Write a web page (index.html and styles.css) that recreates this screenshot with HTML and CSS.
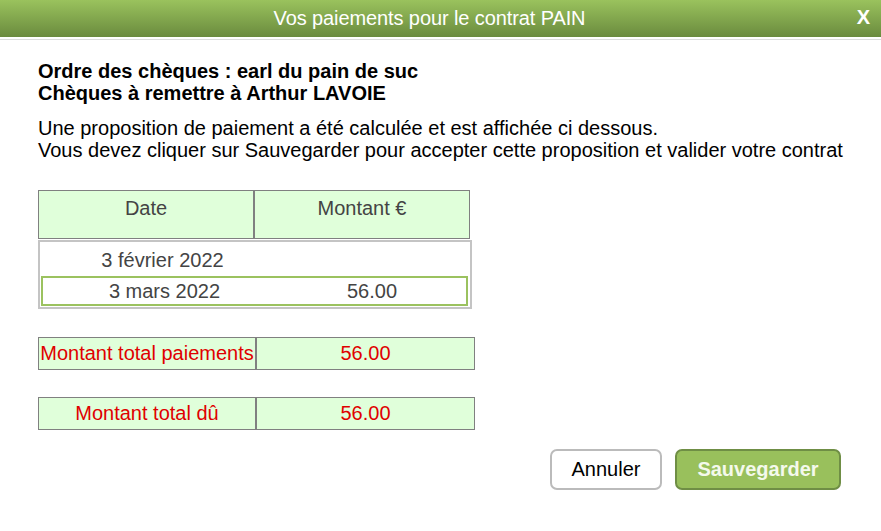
FILE: index.html
```html
<!DOCTYPE html>
<html>
<head>
    <title>Vos paiements pour le contrat PAIN</title>
    <link rel="stylesheet" href="styles.css">
</head>
<body>
    <div class="dialog">
        <div class="titlebar">
            <span class="title">Vos paiements pour le contrat PAIN</span>
            <span class="close">X</span>
        </div>
        <div class="content">
            <p class="cheques">
                Ordre des chèques : earl du pain de suc<br>
                Chèques à remettre à Arthur LAVOIE
            </p>
            <p class="info">
                Une proposition de paiement a été calculée et est affichée ci dessous.<br>
                Vous devez cliquer sur Sauvegarder pour accepter cette proposition et valider votre contrat
            </p>

            <div class="grid-head">
                <div class="head-cell">Date</div>
                <div class="head-cell">Montant €</div>
            </div>
            <div class="grid-rows">
                <div class="row">
                    <span>3 février 2022</span>
                    <span></span>
                </div>
                <div class="row selected">
                    <span>3 mars 2022</span>
                    <span>56.00</span>
                </div>
            </div>

            <div class="total">
                <div class="total-cell">Montant total paiements</div>
                <div class="total-cell">56.00</div>
            </div>
            <div class="total">
                <div class="total-cell">Montant total dû</div>
                <div class="total-cell">56.00</div>
            </div>

            <div class="actions">
                <button class="btn cancel">Annuler</button>
                <button class="btn save">Sauvegarder</button>
            </div>
        </div>
    </div>
</body>
</html>
```

FILE: styles.css
```css
body {
    margin: 0;
    background-color: #fff;
    font-family: "Liberation Sans", Arial, sans-serif;
}
.dialog {
    width: 881px;
    height: 531px;
    background-color: #fff;
}
.titlebar {
    height: 37px;
    display: flex;
    align-items: center;
    justify-content: center;
    position: relative;
    background: linear-gradient(#9ac25d, #6a8b3e);
    color: #fff;
    margin-bottom: 2px;
}
.title {
    font-size: 20px;
    margin-left: -22px;
    letter-spacing: -0.1px;
}
.close {
    position: absolute;
    right: 11px;
    top: 6px;
    font-size: 20px;
    font-weight: bold;
}
.content {
    border-top: 1px solid #dcdcdc;
    padding: 20px 0 0 38px;
}
.cheques {
    margin: 0;
    font-weight: bold;
    font-size: 20px;
    line-height: 22px;
    color: #000;
}
.info {
    margin: 13px 0 0;
    font-size: 20px;
    line-height: 22px;
    color: #000;
}
.grid-head {
    margin-top: 29px;
    width: 432px;
    display: grid;
    grid-template-columns: 216px 216px;
}
.head-cell {
    height: 49px;
    box-sizing: border-box;
    border: 1px solid #808080;
    background-color: #e0ffda;
    color: #444;
    font-size: 20px;
    text-align: center;
    padding-top: 6px;
}
.grid-rows {
    width: 434px;
    box-sizing: border-box;
    border: 2px solid #c4c4c4;
    padding: 2px 2px 1px 1px;
    margin-top: 1px;
}
.row {
    display: grid;
    grid-template-columns: 243px 172px;
    height: 32px;
    align-items: center;
    text-align: center;
    font-size: 20px;
    color: #444;
    box-sizing: border-box;
}
.row.selected {
    height: 30px;
    border: 2px solid #9bc25f;
}
.total {
    width: 437px;
    display: grid;
    grid-template-columns: 218px 219px;
    margin-top: 28px;
}
.total + .total {
    margin-top: 27px;
}
.total-cell {
    height: 33px;
    box-sizing: border-box;
    border: 1px solid #808080;
    background-color: #e0ffda;
    color: #e00000;
    font-size: 20px;
    text-align: center;
    line-height: 31px;
    white-space: nowrap;
}
.actions {
    display: flex;
    justify-content: flex-end;
    gap: 13px;
    margin-top: 19px;
    padding-right: 40px;
}
.btn {
    height: 41px;
    border-radius: 7px;
    font-family: "Liberation Sans", Arial, sans-serif;
    font-size: 20px;
    cursor: pointer;
}
.cancel {
    width: 112px;
    background-color: #fff;
    border: 2px solid #bbb;
    color: #000;
}
.save {
    width: 166px;
    background-color: #99c05c;
    border: 2px solid #6f8e45;
    color: #f4f9ec;
    font-weight: bold;
}
```
